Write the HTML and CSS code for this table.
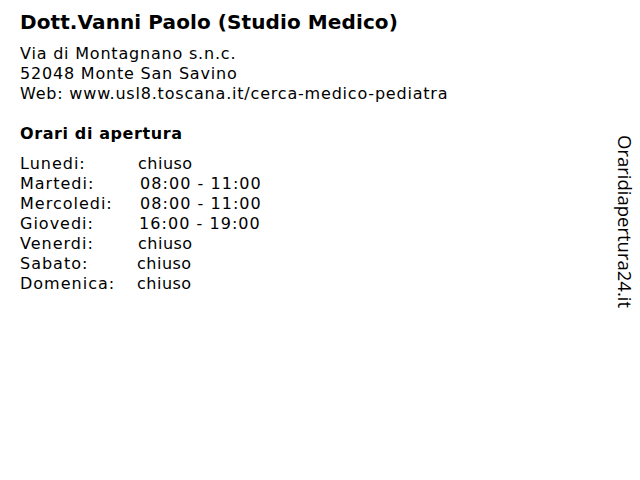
FILE: index.html
```html
<!DOCTYPE html>
<html>
<head>
<meta charset="utf-8">
<link rel="stylesheet" href="styles.css">
</head>
<body>
<div class="page">
  <main class="info">
    <h1 class="title">Dott.Vanni Paolo (Studio Medico)</h1>
    <div class="address">
      <div>Via di Montagnano s.n.c.</div>
      <div>52048 Monte San Savino</div>
      <div>Web: www.usl8.toscana.it/cerca-medico-pediatra</div>
    </div>
    <h2 class="subtitle">Orari di apertura</h2>
    <div class="hours">
      <span class="day">Lunedi:</span><span class="time">chiuso</span>
      <span class="day">Martedi:</span><span class="time num t2">08:00 - 11:00</span>
      <span class="day">Mercoledi:</span><span class="time num t2">08:00 - 11:00</span>
      <span class="day">Giovedi:</span><span class="time num t1">16:00 - 19:00</span>
      <span class="day">Venerdi:</span><span class="time">chiuso</span>
      <span class="day">Sabato:</span><span class="time tm1">chiuso</span>
      <span class="day">Domenica:</span><span class="time tm1">chiuso</span>
    </div>
  </main>
  <aside class="brand">Oraridiapertura24.it</aside>
</div>
</body>
</html>
```
FILE: styles.css
```css
html, body {
  margin: 0;
  padding: 0;
  background: #fff;
}
body {
  font-family: "DejaVu Sans", Verdana, sans-serif;
  color: #000;
}
.page {
  display: flex;
  justify-content: space-between;
  width: 640px;
  height: 480px;
}
.info {
  padding: 10px 0 0 20px;
}
.title {
  margin: 0;
  font-size: 20px;
  font-weight: bold;
  line-height: 25px;
  letter-spacing: 0.1px;
}
.address {
  margin-top: 9px;
  font-size: 16px;
  line-height: 20px;
  letter-spacing: 0.8px;
}
.subtitle {
  margin: 20px 0 0 0;
  font-size: 16px;
  font-weight: bold;
  line-height: 20px;
  letter-spacing: 0.6px;
}
.hours {
  margin-top: 10px;
  display: grid;
  grid-template-columns: 118px auto;
  font-size: 16px;
  line-height: 20px;
  letter-spacing: 0.8px;
}
.day { letter-spacing: 1px; }
.time { letter-spacing: 0.5px; }
.num { letter-spacing: 1.05px; }
.t2 { padding-left: 2px; }
.t1 { padding-left: 1px; }
.tm1 { margin-left: -1px; }
.brand {
  writing-mode: vertical-rl;
  font-family: "Open Sans", sans-serif;
  font-size: 18.5px;
  line-height: 20px;
  margin: 135px 5px 0 0;
  align-self: flex-start;
}
```
